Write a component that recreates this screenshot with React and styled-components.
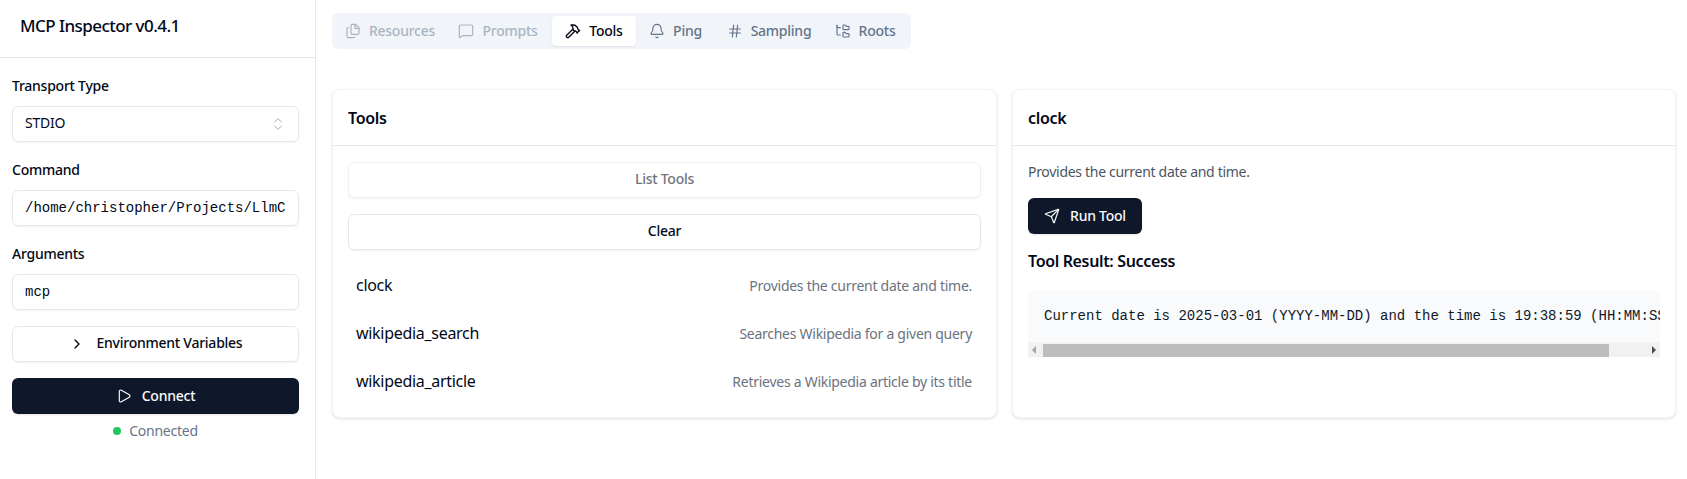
import React from 'react';
import styled, { createGlobalStyle } from 'styled-components';
import { Files, MessageSquare, Hammer, Bell, Hash, FolderTree, ChevronsUpDown, ChevronRight, Play, Send } from 'lucide-react';

const GlobalStyle = createGlobalStyle`
  * { box-sizing: border-box; }
  html, body { margin: 0; padding: 0; background: #fff; }
  body {
    font-family: "Noto Sans", "Liberation Sans", sans-serif;
    color: #020817;
    overflow: hidden;
  }
`;

const Page = styled.div`
  display: flex;
  width: 1687px;
  height: 479px;
  background: #fff;
`;

const Sidebar = styled.aside`
  width: 316px;
  flex-shrink: 0;
  border-right: 1px solid #e2e8f0;
  display: flex;
  flex-direction: column;
`;

const SidebarHeader = styled.div`
  height: 58px;
  padding: 0 20px 6px;
  display: flex;
  align-items: center;
  border-bottom: 1px solid #e2e8f0;
  font-size: 17px;
  font-weight: 500;
  letter-spacing: -0.55px;
`;

const SidebarBody = styled.div`
  padding: 18px 16px 0 12px;
  display: flex;
  flex-direction: column;
`;

const FieldLabel = styled.label`
  font-size: 14px;
  line-height: 20px;
  font-weight: 500;
  letter-spacing: -0.25px;
  margin-bottom: 10px;
`;

const Field = styled.div`
  height: 36px;
  border: 1px solid #e2e8f0;
  border-radius: 6px;
  box-shadow: 0 1px 2px rgba(0, 0, 0, 0.05);
  display: flex;
  align-items: center;
  justify-content: space-between;
  padding: 0 12px 1px;
  margin-bottom: 18px;
  font-size: 14px;
  overflow: hidden;
  white-space: nowrap;
  font-family: ${({ $mono }) => ($mono ? '"Liberation Mono", monospace' : 'inherit')};
  letter-spacing: ${({ $mono }) => ($mono ? '0' : '-0.25px')};
`;

const SelectField = styled(Field)`
  padding-bottom: 3px;

  svg {
    margin-top: 3px;
  }
`;

const ArgsField = styled(Field)`
  margin-bottom: 16px;
`;

const OutlineButton = styled.div`
  height: 36px;
  padding-bottom: 3px;
  border: 1px solid ${({ $muted }) => ($muted ? '#eef2f6' : '#e2e8f0')};
  border-radius: 6px;
  box-shadow: 0 1px 2px rgba(0, 0, 0, 0.05);
  display: flex;
  align-items: center;
  justify-content: center;
  gap: 8px;
  font-size: 14px;
  font-weight: 500;
  letter-spacing: -0.25px;
  color: ${({ $muted }) => ($muted ? '#6f7480' : '#020817')};
  background: #fff;

  svg {
    margin-top: 3px;
  }
`;

const EnvButton = styled(OutlineButton)`
  margin-bottom: 16px;
  gap: 12px;
`;

const PrimaryButton = styled.div`
  height: 36px;
  padding-bottom: 2px;
  background: #0f172a;
  color: #f8fafc;
  border-radius: 6px;
  box-shadow: 0 1px 2px rgba(0, 0, 0, 0.1);
  display: inline-flex;
  align-items: center;
  justify-content: center;
  gap: 10px;
  font-size: 14px;
  font-weight: 500;
  letter-spacing: -0.25px;

  svg {
    margin-top: 2px;
  }
`;

const Status = styled.div`
  margin-top: 7px;
  display: flex;
  align-items: center;
  justify-content: center;
  gap: 8px;
  font-size: 14px;
  line-height: 20px;
  letter-spacing: -0.25px;
  color: #64748b;
`;

const Dot = styled.span`
  width: 8px;
  height: 8px;
  border-radius: 50%;
  background: #22c55e;
`;

const Main = styled.main`
  flex: 1;
  padding: 13px 11px 0 16px;
  display: flex;
  flex-direction: column;
  min-width: 0;
`;

const TabBar = styled.div`
  align-self: flex-start;
  height: 36px;
  padding: 3px 4px;
  background: #f1f5f9;
  border-radius: 6px;
  display: flex;
  margin-bottom: 40px;
`;

const Tab = styled.div`
  width: ${({ $width }) => $width}px;
  height: 30px;
  padding-bottom: 2px;
  border-radius: 4px;
  display: flex;
  align-items: center;
  justify-content: center;
  gap: 8px;
  font-size: 14px;
  font-weight: 500;
  letter-spacing: -0.25px;
  color: ${({ $active }) => ($active ? '#020817' : '#64748b')};
  background: ${({ $active }) => ($active ? '#fff' : 'transparent')};
  box-shadow: ${({ $active }) => ($active ? '0 1px 2px rgba(0, 0, 0, 0.08)' : 'none')};
  opacity: ${({ $disabled }) => ($disabled ? 0.5 : 1)};

  svg {
    margin-top: 2px;
  }
`;

const Columns = styled.div`
  display: grid;
  grid-template-columns: 665px 664px;
  gap: 15px;
`;

const Card = styled.section`
  height: 329px;
  border: 1px solid #f1f5f9;
  border-radius: 8px;
  box-shadow: 0 1px 3px rgba(0, 0, 0, 0.12);
  background: #fff;
`;

const CardHeader = styled.h3`
  margin: 0;
  height: 56px;
  padding: 0 15px;
  display: flex;
  align-items: center;
  border-bottom: 1px solid #e2e8f0;
  font-size: 16px;
  font-weight: 600;
  letter-spacing: -0.3px;
`;

const CardBody = styled.div`
  padding: 16px 15px;
  display: flex;
  flex-direction: column;
`;

const ToolButtons = styled.div`
  display: flex;
  flex-direction: column;
  gap: 16px;
  margin-bottom: 11px;
`;

const ToolRow = styled.div`
  height: 48px;
  padding: 0 9px 0 8px;
  display: flex;
  align-items: center;
  justify-content: space-between;
`;

const ToolName = styled.span`
  font-size: 16px;
  letter-spacing: -0.3px;
`;

const ToolDesc = styled.span`
  font-size: 14px;
  letter-spacing: -0.27px;
  color: #6b7280;
`;

const Description = styled.p`
  margin: 0 0 16px;
  font-size: 14px;
  line-height: 20px;
  letter-spacing: -0.3px;
  color: #4b5563;
`;

const RunButton = styled(PrimaryButton)`
  align-self: flex-start;
  width: 114px;
`;

const ResultTitle = styled.h4`
  margin: 15px 0 17px;
  font-size: 16px;
  line-height: 24px;
  font-weight: 600;
  letter-spacing: -0.35px;
`;

const ResultBox = styled.div`
  background: #f9fafb;
  border-radius: 4px 4px 0 0;
  width: 632px;
`;

const ResultText = styled.pre`
  margin: 0;
  height: 52px;
  padding: 16px 16px 0;
  overflow: hidden;
  font-family: "Liberation Mono", monospace;
  font-size: 14px;
  line-height: 20px;
  color: #111827;
`;

const ScrollTrack = styled.div`
  height: 15px;
  background: #f1f1f1;
  display: flex;
  align-items: center;
  justify-content: space-between;
  position: relative;
  padding: 0 4px;
`;

const ScrollThumb = styled.div`
  position: absolute;
  top: 2px;
  bottom: 0;
  left: 15px;
  width: 566px;
  background: #bdbdbd;
`;

const Arrow = styled.span`
  width: 0;
  height: 0;
  border-top: 4px solid transparent;
  border-bottom: 4px solid transparent;
  ${({ $dir }) => ($dir === 'left' ? 'border-right: 4px solid #a3a3a3;' : 'border-left: 4px solid #505050;')}
`;

const tabs = [
  { label: 'Resources', Icon: Files, width: 108, disabled: true },
  { label: 'Prompts', Icon: MessageSquare, width: 108, disabled: true },
  { label: 'Tools', Icon: Hammer, width: 84, active: true },
  { label: 'Ping', Icon: Bell, width: 79 },
  { label: 'Sampling', Icon: Hash, width: 108 },
  { label: 'Roots', Icon: FolderTree, width: 84 },
];

const tools = [
  { name: 'clock', desc: 'Provides the current date and time.' },
  { name: 'wikipedia_search', desc: 'Searches Wikipedia for a given query' },
  { name: 'wikipedia_article', desc: 'Retrieves a Wikipedia article by its title' },
];

const App = () => (
  <>
    <GlobalStyle />
    <Page>
      <Sidebar>
        <SidebarHeader>MCP Inspector v0.4.1</SidebarHeader>
        <SidebarBody>
          <FieldLabel>Transport Type</FieldLabel>
          <SelectField>
            STDIO
            <ChevronsUpDown size={16} color="#a3a9b3" strokeWidth={1.5} />
          </SelectField>
          <FieldLabel>Command</FieldLabel>
          <Field $mono>/home/christopher/Projects/LlmC</Field>
          <FieldLabel>Arguments</FieldLabel>
          <ArgsField $mono>mcp</ArgsField>
          <EnvButton>
            <ChevronRight size={16} />
            Environment Variables
          </EnvButton>
          <PrimaryButton>
            <Play size={16} strokeWidth={1.75} />
            Connect
          </PrimaryButton>
          <Status>
            <Dot />
            Connected
          </Status>
        </SidebarBody>
      </Sidebar>
      <Main>
        <TabBar>
          {tabs.map(({ label, Icon, width, active, disabled }) => (
            <Tab key={label} $width={width} $active={active} $disabled={disabled}>
              <Icon size={16} strokeWidth={active ? 2 : 1.75} />
              {label}
            </Tab>
          ))}
        </TabBar>
        <Columns>
          <Card>
            <CardHeader>Tools</CardHeader>
            <CardBody>
              <ToolButtons>
                <OutlineButton $muted>List Tools</OutlineButton>
                <OutlineButton>Clear</OutlineButton>
              </ToolButtons>
              {tools.map((tool) => (
                <ToolRow key={tool.name}>
                  <ToolName>{tool.name}</ToolName>
                  <ToolDesc>{tool.desc}</ToolDesc>
                </ToolRow>
              ))}
            </CardBody>
          </Card>
          <Card>
            <CardHeader>clock</CardHeader>
            <CardBody>
              <Description>Provides the current date and time.</Description>
              <RunButton>
                <Send size={16} strokeWidth={1.75} />
                Run Tool
              </RunButton>
              <ResultTitle>Tool Result: Success</ResultTitle>
              <ResultBox>
                <ResultText>Current date is 2025-03-01 (YYYY-MM-DD) and the time is 19:38:59 (HH:MM:SS)</ResultText>
                <ScrollTrack>
                  <ScrollThumb />
                  <Arrow $dir="left" />
                  <Arrow $dir="right" />
                </ScrollTrack>
              </ResultBox>
            </CardBody>
          </Card>
        </Columns>
      </Main>
    </Page>
  </>
);

export default App;
